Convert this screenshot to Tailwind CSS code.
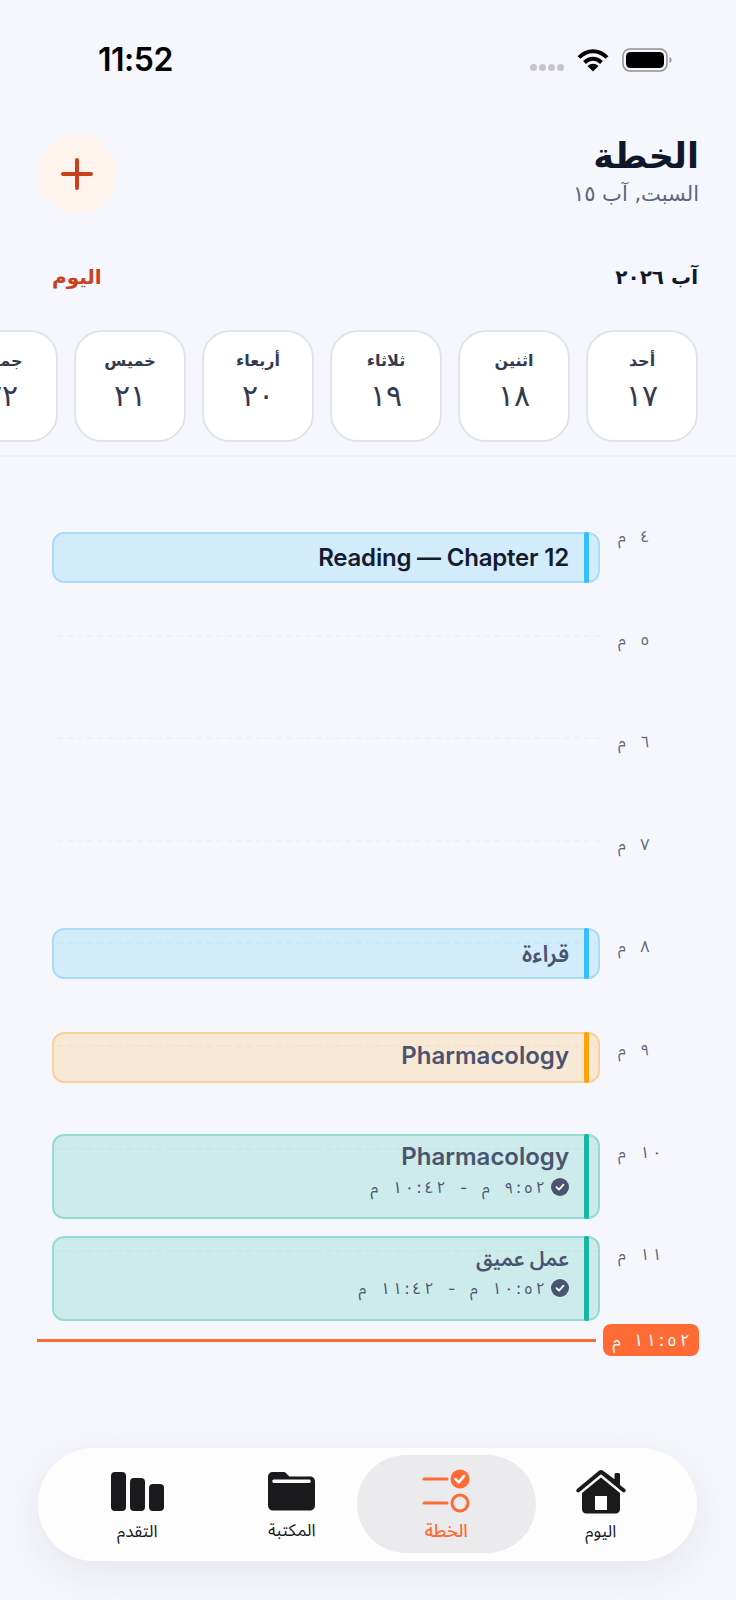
<!DOCTYPE html>
<html lang="ar" dir="rtl">
<head>
  <meta charset="UTF-8">
  <meta name="viewport" content="width=device-width, initial-scale=1.0">
  <title>الخطة</title>
  <script src="https://cdn.jsdelivr.net/npm/@tailwindcss/browser@4"></script>
</head>
<body class="bg-[#f6f7fc] font-['Inter','Noto_Sans_Arabic','DejaVu_Sans',sans-serif]">
  <div class="relative w-[736px] h-[1600px] overflow-hidden">

    <!-- Status bar -->
    <div dir="ltr" class="h-[134px] flex items-start justify-between pl-[98px] pr-[64px] pt-[44px]">
      <span class="text-[32px] leading-[32px] font-semibold tracking-[-0.5px] text-black">11:52</span>
      <div class="flex items-start gap-[13px] pt-[4px]">
        <div class="flex gap-[2px] mt-[16px]">
          <span class="w-[7px] h-[7px] rounded-full bg-[#c6c6ca]"></span>
          <span class="w-[7px] h-[7px] rounded-full bg-[#c6c6ca]"></span>
          <span class="w-[7px] h-[7px] rounded-full bg-[#c6c6ca]"></span>
          <span class="w-[7px] h-[7px] rounded-full bg-[#c6c6ca]"></span>
        </div>
        <svg width="32" height="24" viewBox="0 0 32 24" fill="none" stroke="#000" stroke-width="4">
          <path d="M2 9.500C10 1 22 1 30 9.500"/>
          <path d="M7.500 14.500C12.500 9.500 19.500 9.500 24.500 14.500"/>
          <path d="M16 23.500L10.500 18C14 15 18 15 21.500 18Z" fill="#000" stroke="none"/>
        </svg>
        <svg width="50" height="24" viewBox="0 0 50 24">
          <rect x="1" y="1" width="44" height="22" rx="7" fill="none" stroke="#8e8e93" stroke-width="1.500"/>
          <rect x="4" y="4" width="38" height="16" rx="4.500" fill="#000"/>
          <path d="M47.500 9c1.500.5 2 1.500 2 3s-.5 2.500-2 3z" fill="#8e8e93"/>
        </svg>
      </div>
    </div>

    <!-- Header -->
    <div class="h-[80px] flex items-start justify-between pr-[37px] pl-[37px]">
      <div class="font-['DejaVu_Sans',sans-serif]">
        <h1 class="text-[35px] leading-[44px] font-bold text-[#0f172a]">الخطة</h1>
        <p class="text-[21px] leading-[28px] text-[#5d6680] mt-[2px]">السبت, آب ١٥</p>
      </div>
      <button class="w-[80px] h-[80px] rounded-full bg-[#fff3ee] flex items-center justify-center">
        <svg width="32" height="32" viewBox="0 0 32 32" fill="none" stroke="#c9401a" stroke-width="4" stroke-linecap="round">
          <path d="M16 2v28M2 16h28"/>
        </svg>
      </button>
    </div>

    <!-- Month row -->
    <div class="mt-[48px] h-[30px] flex items-center justify-between pr-[38px] pl-[52px] font-['DejaVu_Sans',sans-serif]">
      <span class="text-[20px] font-bold text-[#0f172a]">آب ٢٠٢٦</span>
      <span class="text-[20px] font-bold text-[#c9401a]">اليوم</span>
    </div>

    <!-- Day strip -->
    <div class="mt-[38px] flex gap-[16px] pr-[38px] pb-[13px] overflow-hidden border-b-2 border-[#eef0f5] font-['DejaVu_Sans',sans-serif]">
      <div class="shrink-0 w-[112px] h-[112px] rounded-[28px] bg-white border-2 border-[#e0e3ee] flex flex-col items-center pt-[18px] text-[#333b52]">
        <span class="text-[16px] leading-[22px] font-semibold">أحد</span>
        <span class="text-[30px] leading-[36px] mt-[6px]">١٧</span>
      </div>
      <div class="shrink-0 w-[112px] h-[112px] rounded-[28px] bg-white border-2 border-[#e0e3ee] flex flex-col items-center pt-[18px] text-[#333b52]">
        <span class="text-[16px] leading-[22px] font-semibold">اثنين</span>
        <span class="text-[30px] leading-[36px] mt-[6px]">١٨</span>
      </div>
      <div class="shrink-0 w-[112px] h-[112px] rounded-[28px] bg-white border-2 border-[#e0e3ee] flex flex-col items-center pt-[18px] text-[#333b52]">
        <span class="text-[16px] leading-[22px] font-semibold">ثلاثاء</span>
        <span class="text-[30px] leading-[36px] mt-[6px]">١٩</span>
      </div>
      <div class="shrink-0 w-[112px] h-[112px] rounded-[28px] bg-white border-2 border-[#e0e3ee] flex flex-col items-center pt-[18px] text-[#333b52]">
        <span class="text-[16px] leading-[22px] font-semibold">أربعاء</span>
        <span class="text-[30px] leading-[36px] mt-[6px]">٢٠</span>
      </div>
      <div class="shrink-0 w-[112px] h-[112px] rounded-[28px] bg-white border-2 border-[#e0e3ee] flex flex-col items-center pt-[18px] text-[#333b52]">
        <span class="text-[16px] leading-[22px] font-semibold">خميس</span>
        <span class="text-[30px] leading-[36px] mt-[6px]">٢١</span>
      </div>
      <div class="shrink-0 w-[112px] h-[112px] rounded-[28px] bg-white border-2 border-[#e0e3ee] flex flex-col items-center pt-[18px] text-[#333b52]">
        <span class="text-[16px] leading-[22px] font-semibold">جمعة</span>
        <span class="text-[30px] leading-[36px] mt-[6px]">٢٢</span>
      </div>
    </div>

    <!-- Timeline -->
    <div class="relative pt-[75px] pr-[36px] pl-[57px]">

      <div class="flex h-[102.6px]">
        <span class="w-[100px] shrink-0 -mt-[6px] text-[16px] leading-[20px] [word-spacing:10px] text-[#5b6380] text-left pl-[18px]">٤ م</span>
        <div class="relative flex-1 border-t-2 border-dashed border-[#f0f1f6] h-0">
          <div class="absolute top-[-2px] left-[-5px] right-0 h-[51px] rounded-[12px] border-2 border-[#abdcf7] bg-[#36bdff]/18 flex items-center pr-[29px]">
            <span class="absolute right-[9px] -top-[2px] -bottom-[2px] w-[5px] rounded-[2px] bg-[#36bdff]"></span>
            <span dir="ltr" class="text-[24px] tracking-[-0.2px] font-semibold text-[#131b2e]">Reading — Chapter 12</span>
          </div>
        </div>
      </div>

      <div class="flex h-[102.6px]">
        <span class="w-[100px] shrink-0 -mt-[6px] text-[16px] leading-[20px] [word-spacing:10px] text-[#5b6380] text-left pl-[18px]">٥ م</span>
        <div class="flex-1 border-t-2 border-dashed border-[#f0f1f6] h-0"></div>
      </div>
      <div class="flex h-[102.6px]">
        <span class="w-[100px] shrink-0 -mt-[6px] text-[16px] leading-[20px] [word-spacing:10px] text-[#5b6380] text-left pl-[18px]">٦ م</span>
        <div class="flex-1 border-t-2 border-dashed border-[#f0f1f6] h-0"></div>
      </div>
      <div class="flex h-[102.6px]">
        <span class="w-[100px] shrink-0 -mt-[6px] text-[16px] leading-[20px] [word-spacing:10px] text-[#5b6380] text-left pl-[18px]">٧ م</span>
        <div class="flex-1 border-t-2 border-dashed border-[#f0f1f6] h-0"></div>
      </div>

      <div class="flex h-[102.6px]">
        <span class="w-[100px] shrink-0 -mt-[6px] text-[16px] leading-[20px] [word-spacing:10px] text-[#5b6380] text-left pl-[18px]">٨ م</span>
        <div class="relative flex-1 border-t-2 border-dashed border-[#f0f1f6] h-0">
          <div class="absolute top-[-16px] left-[-5px] right-0 h-[51px] rounded-[12px] border-2 border-[#abdcf7] bg-[#36bdff]/18 flex items-center pr-[29px]">
            <span class="absolute right-[9px] -top-[2px] -bottom-[2px] w-[5px] rounded-[2px] bg-[#36bdff]"></span>
            <span class="text-[23px] font-semibold text-[#4a5470]">قراءة</span>
          </div>
        </div>
      </div>

      <div class="flex h-[102.6px]">
        <span class="w-[100px] shrink-0 -mt-[6px] text-[16px] leading-[20px] [word-spacing:10px] text-[#5b6380] text-left pl-[18px]">٩ م</span>
        <div class="relative flex-1 border-t-2 border-dashed border-[#f0f1f6] h-0">
          <div class="absolute top-[-15px] left-[-5px] right-0 h-[51px] rounded-[12px] border-2 border-[#f8d29a] bg-[#ffa20a]/16 flex items-center pr-[29px] pb-[2px]">
            <span class="absolute right-[9px] -top-[2px] -bottom-[2px] w-[5px] rounded-[2px] bg-[#ffa20a]"></span>
            <span dir="ltr" class="text-[24px] font-semibold text-[#4a5470]">Pharmacology</span>
          </div>
        </div>
      </div>

      <div class="flex h-[102.6px]">
        <span class="w-[100px] shrink-0 -mt-[6px] text-[16px] leading-[20px] [word-spacing:10px] text-[#5b6380] text-left pl-[18px]"><bdi dir="ltr">١&#8206;&#8201;&#8206;٠</bdi> م</span>
        <div class="relative flex-1 border-t-2 border-dashed border-[#f0f1f6] h-0">
          <div class="absolute top-[-16px] left-[-5px] right-0 h-[85px] rounded-[12px] border-2 border-[#94dcd2] bg-[#17b8a2]/18 pr-[29px] pt-[5px]">
            <span class="absolute right-[9px] -top-[2px] -bottom-[2px] w-[5px] rounded-[2px] bg-[#17b8a2]"></span>
            <p dir="ltr" class="text-right text-[24px] leading-[32px] font-semibold text-[#4a5470]">Pharmacology</p>
            <div class="flex items-center gap-[6px] mt-[4px] text-[#4a5470]">
              <svg width="18" height="18" viewBox="0 0 18 18"><circle cx="9" cy="9" r="9" fill="#4a5470"/><path d="M5.500 9.200l2.500 2.500 4.500-5" fill="none" stroke="#fff" stroke-width="1.800" stroke-linecap="round" stroke-linejoin="round"/></svg>
              <span class="text-[16px] leading-[20px] [word-spacing:10px]"><bdi dir="ltr">٩&#8206;&#8201;:&#8201;&#8206;٥&#8206;&#8201;&#8206;٢</bdi> م - <bdi dir="ltr">١&#8206;&#8201;&#8206;٠&#8206;&#8201;:&#8201;&#8206;٤&#8206;&#8201;&#8206;٢</bdi> م</span>
            </div>
          </div>
        </div>
      </div>

      <div class="flex h-[102.6px]">
        <span class="w-[100px] shrink-0 -mt-[6px] text-[16px] leading-[20px] [word-spacing:10px] text-[#5b6380] text-left pl-[18px]"><bdi dir="ltr">١&#8206;&#8201;&#8206;١</bdi> م</span>
        <div class="relative flex-1 border-t-2 border-dashed border-[#f0f1f6] h-0">
          <div class="absolute top-[-16px] left-[-5px] right-0 h-[85px] rounded-[12px] border-2 border-[#94dcd2] bg-[#17b8a2]/18 pr-[29px] pt-[5px]">
            <span class="absolute right-[9px] -top-[2px] -bottom-[2px] w-[5px] rounded-[2px] bg-[#17b8a2]"></span>
            <p class="text-[20.5px] leading-[32px] font-semibold text-[#4a5470]">عمل عميق</p>
            <div class="flex items-center gap-[6px] mt-[3px] text-[#4a5470]">
              <svg width="18" height="18" viewBox="0 0 18 18"><circle cx="9" cy="9" r="9" fill="#4a5470"/><path d="M5.500 9.200l2.500 2.500 4.500-5" fill="none" stroke="#fff" stroke-width="1.800" stroke-linecap="round" stroke-linejoin="round"/></svg>
              <span class="text-[16px] leading-[20px] [word-spacing:10px]"><bdi dir="ltr">١&#8206;&#8201;&#8206;٠&#8206;&#8201;:&#8201;&#8206;٥&#8206;&#8201;&#8206;٢</bdi> م - <bdi dir="ltr">١&#8206;&#8201;&#8206;١&#8206;&#8201;:&#8201;&#8206;٤&#8206;&#8201;&#8206;٢</bdi> م</span>
            </div>
          </div>
          <!-- Now marker -->
          <div class="absolute top-[72px] right-[-99px] left-[-20px] flex items-center gap-[7px]">
            <span class="w-[96px] h-[32px] shrink-0 rounded-[8px] bg-[#ff6b35] text-white text-[17px] leading-[32px] [word-spacing:8px] whitespace-nowrap text-center"><bdi dir="ltr">١&#8206;&#8201;&#8206;١&#8206;&#8201;:&#8201;&#8206;٥&#8206;&#8201;&#8206;٢</bdi> م</span>
            <span class="flex-1 h-[3px] bg-[#ff6b35]"></span>
          </div>
        </div>
      </div>
    </div>

    <!-- Tab bar -->
    <nav class="absolute left-[38px] top-[1448px] w-[659px] h-[113px] rounded-[56px] bg-[#fdfdfe] shadow-[0_12px_40px_rgba(30,40,70,0.08)] grid grid-cols-4 pr-[19px] pl-[22px]">
      <a class="flex flex-col items-center pt-[21px]">
        <svg width="50" height="45" viewBox="0 0 50 45" class="text-[#1a1a1c]" fill="currentColor">
          <path d="M25 1c-.9 0-1.500.3-2.100.8L1 20c-.9.800-1 2-.3 2.800.7.800 1.900.9 2.700.2L25 5.300 46.600 23c.8.700 2 .6 2.700-.2.700-.8.600-2-.3-2.800l-5-4.100V5.500c0-.8-.6-1.500-1.500-1.500h-2.500c-.8 0-1.500.7-1.500 1.500v4.700L27.100 1.800C26.500 1.300 25.900 1 25 1z"/>
          <path fill-rule="evenodd" d="M25 8.500L6 24v16c0 2.800 1.700 4.500 4.500 4.500h29c2.800 0 4.500-1.700 4.500-4.500V24L25 8.500zM19 27h12v14H19V27z"/>
        </svg>
        <span class="text-[17px] leading-[20px] mt-[7px] text-[#1a1a1c]">اليوم</span>
      </a>
      <a class="relative flex flex-col items-center pt-[21px]">
        <span class="absolute top-[7px] bottom-[8px] -inset-x-[12px] rounded-[49px] bg-[#ebebed]"></span>
        <svg width="48" height="46" viewBox="0 0 48 46" class="relative" fill="none">
          <path d="M2 10h23M2 34h23" stroke="#ff6b35" stroke-width="3" stroke-linecap="round"/>
          <circle cx="38" cy="10" r="9.500" fill="#ff6b35"/>
          <path d="M33.500 10.200l3.200 3.200 5.500-6.500" stroke="#fff" stroke-width="2.500" stroke-linecap="round" stroke-linejoin="round"/>
          <circle cx="38" cy="34" r="8" stroke="#ff6b35" stroke-width="3"/>
        </svg>
        <span class="relative text-[18px] leading-[20px] mt-[6px] font-medium text-[#ff6b35]">الخطة</span>
      </a>
      <a class="flex flex-col items-center pt-[24px]">
        <svg width="47" height="39" viewBox="0 0 47 39" class="text-[#1a1a1c]" fill="currentColor">
          <path fill-rule="evenodd" d="M0 5c0-3 2-5 5-5h10c1.500 0 2.500.4 3.500 1.400L21.500 4.500H42c3 0 5 2 5 5V33c0 3.500-2 5.500-5.500 5.500h-36C2 38.500 0 36.500 0 33V5zM6 7.500c-1 0-1.700.7-1.700 1.700S5 11 6 11h35c1 0 1.700-.8 1.700-1.800S42 7.500 41 7.500H6z"/>
        </svg>
        <span class="text-[17px] leading-[20px] mt-[9px] text-[#1a1a1c]">المكتبة</span>
      </a>
      <a class="flex flex-col items-center pt-[24px]">
        <div dir="ltr" class="h-[39px] flex items-end gap-[4px]">
          <span class="w-[15px] h-[39px] rounded-[4px] bg-[#1a1a1c]"></span>
          <span class="w-[15px] h-[33px] rounded-[4px] bg-[#1a1a1c]"></span>
          <span class="w-[15px] h-[27px] rounded-[4px] bg-[#1a1a1c]"></span>
        </div>
        <span class="text-[17px] leading-[20px] mt-[10px] text-[#1a1a1c]">التقدم</span>
      </a>
    </nav>
  </div>
</body>
</html>
